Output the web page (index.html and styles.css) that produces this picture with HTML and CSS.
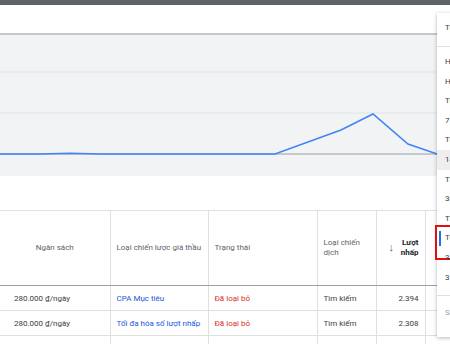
FILE: index.html
```html
<!DOCTYPE html>
<html lang="vi">
<head>
    <meta charset="UTF-8">
    <title>Chiến dịch</title>
    <link rel="stylesheet" href="styles.css">
</head>
<body>
    <div class="topbar"></div>
    <div class="toolbar"></div>

    <div class="chart">
        <svg width="450" height="142" viewBox="0 0 450 142">
            <line x1="0" y1="37" x2="450" y2="37" class="grid"/>
            <line x1="0" y1="78" x2="450" y2="78" class="grid"/>
            <line x1="0" y1="119" x2="450" y2="119" class="axis"/>
            <polyline class="series" points="0,119 40,119 70,118.3 100,119 275,119 341,95 373,79 408,109 437,119 450,119"/>
        </svg>
    </div>

    <div class="gap"></div>

    <table class="campaigns">
        <colgroup>
            <col style="width:110px">
            <col style="width:98px">
            <col style="width:109px">
            <col style="width:59px">
            <col style="width:49px">
            <col style="width:60px">
        </colgroup>
        <thead>
            <tr>
                <th class="budget-head">Ngân sách</th>
                <th>Loại chiến lược giá thầu</th>
                <th>Trạng thái</th>
                <th>Loại chiến dịch</th>
                <th class="sorted">
                    <div class="sort-cell">
                        <span class="arrow">↓</span>
                        <span class="label">Lượt nhấp</span>
                    </div>
                </th>
                <th></th>
            </tr>
        </thead>
        <tbody>
            <tr>
                <td>280.000 ₫/ngày</td>
                <td class="link">CPA Mục tiêu</td>
                <td class="removed">Đã loại bỏ</td>
                <td>Tìm kiếm</td>
                <td class="num">2.394</td>
                <td></td>
            </tr>
            <tr>
                <td>280.000 ₫/ngày</td>
                <td class="link">Tối đa hóa số lượt nhấp</td>
                <td class="removed">Đã loại bỏ</td>
                <td>Tìm kiếm</td>
                <td class="num">2.308</td>
                <td></td>
            </tr>
            <tr>
                <td></td>
                <td></td>
                <td></td>
                <td></td>
                <td></td>
                <td></td>
            </tr>
        </tbody>
    </table>

    <div class="menu">
        <div class="menu-head">Tùy chỉnh</div>
        <div class="menu-list">
            <div class="menu-item">Hôm nay</div>
            <div class="menu-item">Hôm qua</div>
            <div class="menu-item">Tuần này</div>
            <div class="menu-item">7 ngày qua</div>
            <div class="menu-item">Tuần trước</div>
            <div class="menu-item hover">14 ngày qua</div>
            <div class="menu-item">Tháng này</div>
            <div class="menu-item">30 ngày qua</div>
            <div class="menu-item">Tháng trước</div>
            <div class="menu-item selected">Toàn thời gian</div>
            <div class="menu-item">3 tháng qua</div>
            <div class="menu-item">3 năm qua</div>
        </div>
        <div class="menu-foot">So sánh</div>
    </div>
</body>
</html>
```

FILE: styles.css
```css
* {
    margin: 0;
    padding: 0;
    box-sizing: border-box;
}

body {
    width: 450px;
    height: 344px;
    overflow: hidden;
    position: relative;
    background: #ffffff;
    font-family: Roboto, "Liberation Sans", sans-serif;
    font-size: 8px;
    color: #3c4043;
}

.topbar {
    height: 5px;
    background: #5f6368;
}

.toolbar {
    height: 30px;
    background: #ffffff;
    border-bottom: 2px solid #c4c6c8;
}

.chart {
    height: 141px;
    background: #f1f3f4;
}

.chart svg {
    display: block;
}

.chart .grid {
    stroke: #e1e3e5;
    stroke-width: 1;
}

.chart .axis {
    stroke: #9aa0a6;
    stroke-width: 1;
}

.chart .series {
    fill: none;
    stroke: #4285f4;
    stroke-width: 1.6;
}

.gap {
    height: 34px;
}

.campaigns {
    table-layout: fixed;
    width: 485px;
    border-collapse: collapse;
    border-top: 1px solid #e0e0e0;
}

.campaigns th {
    height: 75px;
    font-weight: 400;
    color: #5f6368;
    text-align: left;
    padding: 0 6px;
    border-right: 1px solid #e0e0e0;
    border-bottom: 1px solid #9aa0a6;
    line-height: 10px;
    vertical-align: middle;
}

.campaigns th.budget-head {
    text-align: center;
}

.campaigns td {
    height: 25px;
    padding: 0 6px;
    border-right: 1px solid #e0e0e0;
    border-bottom: 1px solid #e0e0e0;
    white-space: nowrap;
    overflow: hidden;
}

.campaigns td:first-child {
    padding-left: 14px;
}

.campaigns .num {
    text-align: right;
}

.sort-cell {
    display: flex;
    align-items: center;
    justify-content: space-between;
    padding-left: 6px;
}

.sort-cell .arrow {
    font-size: 11px;
    color: #5f6368;
    line-height: 10px;
}

.sort-cell .label {
    width: 24px;
    text-align: right;
    font-weight: 700;
    color: #202124;
}

.link {
    color: #1a56db;
}

.removed {
    color: #d93025;
}

.menu {
    position: absolute;
    left: 437px;
    top: 13px;
    width: 110px;
    height: 324px;
    background: #ffffff;
    box-shadow: 0 1px 4px rgba(0, 0, 0, 0.28);
    color: #3c4043;
}

.menu-head {
    height: 34px;
    line-height: 30px;
    padding-left: 8px;
    border-bottom: 1px solid #e0e0e0;
}

.menu-list {
    padding-top: 5px;
    padding-bottom: 8px;
    border-bottom: 1px solid #e0e0e0;
}

.menu-item {
    height: 19.6px;
    line-height: 19.6px;
    padding-left: 8px;
    position: relative;
}

.menu-item.hover {
    background: #eeeeee;
}

.menu-item.selected::before {
    content: "";
    position: absolute;
    left: 2px;
    top: 3px;
    width: 2px;
    height: 15px;
    background: #1a73e8;
}

.menu-item.selected::after {
    content: "";
    position: absolute;
    left: -2px;
    top: -3px;
    width: 40px;
    height: 31px;
    border: 2px solid #e01010;
}

.menu-foot {
    height: 34px;
    line-height: 34px;
    padding-left: 8px;
    color: #9aa0a6;
}
```
